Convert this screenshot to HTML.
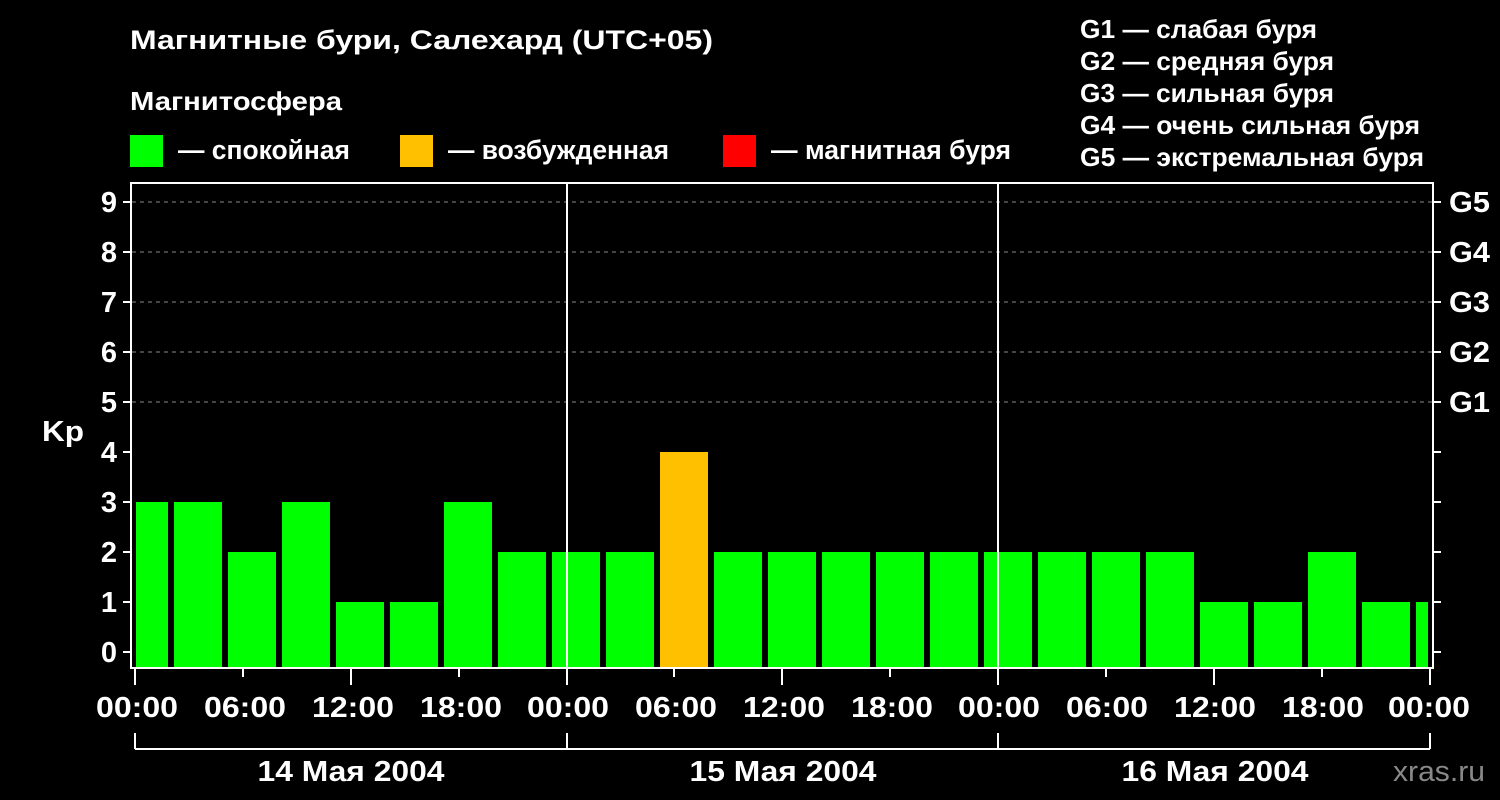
<!DOCTYPE html>
<html><head><meta charset="utf-8"><style>html,body{margin:0;padding:0;background:#000;}svg{display:block}</style></head>
<body>
<svg width="1500" height="800" xmlns="http://www.w3.org/2000/svg" font-family="Liberation Sans, Arial, sans-serif" font-weight="bold" fill="#fff">
<rect width="1500" height="800" fill="#000"/>
<text x="130" y="49" font-size="27" textLength="583" lengthAdjust="spacingAndGlyphs">Магнитные бури, Салехард (UTC+05)</text>
<text x="130" y="110" font-size="26" textLength="212" lengthAdjust="spacingAndGlyphs">Магнитосфера</text>
<rect x="130" y="135" width="33" height="32" fill="#00ff00"/>
<text x="178" y="159" font-size="26.5" textLength="172" lengthAdjust="spacingAndGlyphs">— спокойная</text>
<rect x="400" y="135" width="33" height="32" fill="#ffc000"/>
<text x="448" y="159" font-size="26.5" textLength="221" lengthAdjust="spacingAndGlyphs">— возбужденная</text>
<rect x="723" y="135" width="33" height="32" fill="#ff0000"/>
<text x="771" y="159" font-size="26.5" textLength="240" lengthAdjust="spacingAndGlyphs">— магнитная буря</text>
<g font-size="26">
<text x="1080" y="38" textLength="237" lengthAdjust="spacingAndGlyphs">G1 — слабая буря</text>
<text x="1080" y="70" textLength="254" lengthAdjust="spacingAndGlyphs">G2 — средняя буря</text>
<text x="1080" y="102" textLength="254" lengthAdjust="spacingAndGlyphs">G3 — сильная буря</text>
<text x="1080" y="134" textLength="340" lengthAdjust="spacingAndGlyphs">G4 — очень сильная буря</text>
<text x="1080" y="166" textLength="344" lengthAdjust="spacingAndGlyphs">G5 — экстремальная буря</text>
</g>
<g stroke="#888" stroke-width="1" stroke-dasharray="4,4">
<line x1="132" y1="202" x2="1432" y2="202"/><line x1="132" y1="252" x2="1432" y2="252"/><line x1="132" y1="302" x2="1432" y2="302"/><line x1="132" y1="352" x2="1432" y2="352"/><line x1="132" y1="402" x2="1432" y2="402"/>
</g>
<g fill="#00ff00">
<rect x="136" y="502" width="32" height="166"/>
<rect x="174" y="502" width="48" height="166"/>
<rect x="228" y="552" width="48" height="116"/>
<rect x="282" y="502" width="48" height="166"/>
<rect x="336" y="602" width="48" height="66"/>
<rect x="390" y="602" width="48" height="66"/>
<rect x="444" y="502" width="48" height="166"/>
<rect x="498" y="552" width="48" height="116"/>
<rect x="552" y="552" width="48" height="116"/>
<rect x="606" y="552" width="48" height="116"/>
<rect x="714" y="552" width="48" height="116"/>
<rect x="768" y="552" width="48" height="116"/>
<rect x="822" y="552" width="48" height="116"/>
<rect x="876" y="552" width="48" height="116"/>
<rect x="930" y="552" width="48" height="116"/>
<rect x="984" y="552" width="48" height="116"/>
<rect x="1038" y="552" width="48" height="116"/>
<rect x="1092" y="552" width="48" height="116"/>
<rect x="1146" y="552" width="48" height="116"/>
<rect x="1200" y="602" width="48" height="66"/>
<rect x="1254" y="602" width="48" height="66"/>
<rect x="1308" y="552" width="48" height="116"/>
<rect x="1362" y="602" width="48" height="66"/>
<rect x="1416" y="602" width="12" height="66"/>
</g>
<rect x="660" y="452" width="48" height="216" fill="#ffc000"/>
<g stroke="#fff" stroke-width="2" fill="none">
<rect x="131" y="183" width="1302" height="485"/>
<line x1="567" y1="183" x2="567" y2="668"/>
<line x1="998" y1="183" x2="998" y2="668"/>
<path d="M123 202h8M123 252h8M123 302h8M123 352h8M123 402h8M123 452h8M123 502h8M123 552h8M123 602h8M123 652h8"/>
<path d="M1433 202h8M1433 252h8M1433 302h8M1433 352h8M1433 402h8M1433 452h8M1433 502h8M1433 552h8M1433 602h8M1433 652h8"/>
<path d="M135 668v17M243 668v9M351 668v17M459 668v9M567 668v17M674 668v9M782 668v17M890 668v9M998 668v17M1106 668v9M1214 668v17M1322 668v9M1430 668v17"/>
<path d="M135 733v16M567 733v16M998 733v16M1430 733v16M135 749H1430"/>
</g>
<g font-size="29" text-anchor="end">
<text x="117" y="212">9</text><text x="117" y="262">8</text><text x="117" y="312">7</text><text x="117" y="362">6</text><text x="117" y="412">5</text><text x="117" y="462">4</text><text x="117" y="512">3</text><text x="117" y="562">2</text><text x="117" y="612">1</text><text x="117" y="662">0</text>
</g>
<text x="42" y="441" font-size="29" textLength="42" lengthAdjust="spacingAndGlyphs">Kp</text>
<g font-size="29">
<text x="1449" y="212" textLength="41" lengthAdjust="spacingAndGlyphs">G5</text><text x="1449" y="262" textLength="41" lengthAdjust="spacingAndGlyphs">G4</text><text x="1449" y="312" textLength="41" lengthAdjust="spacingAndGlyphs">G3</text><text x="1449" y="362" textLength="41" lengthAdjust="spacingAndGlyphs">G2</text><text x="1449" y="412" textLength="41" lengthAdjust="spacingAndGlyphs">G1</text>
</g>
<g font-size="29" text-anchor="middle">
<text x="137" y="717" textLength="82" lengthAdjust="spacingAndGlyphs">00:00</text><text x="245" y="717" textLength="82" lengthAdjust="spacingAndGlyphs">06:00</text><text x="353" y="717" textLength="82" lengthAdjust="spacingAndGlyphs">12:00</text><text x="461" y="717" textLength="82" lengthAdjust="spacingAndGlyphs">18:00</text>
<text x="568" y="717" textLength="82" lengthAdjust="spacingAndGlyphs">00:00</text><text x="676" y="717" textLength="82" lengthAdjust="spacingAndGlyphs">06:00</text><text x="784" y="717" textLength="82" lengthAdjust="spacingAndGlyphs">12:00</text><text x="892" y="717" textLength="82" lengthAdjust="spacingAndGlyphs">18:00</text>
<text x="999" y="717" textLength="82" lengthAdjust="spacingAndGlyphs">00:00</text><text x="1107" y="717" textLength="82" lengthAdjust="spacingAndGlyphs">06:00</text><text x="1215" y="717" textLength="82" lengthAdjust="spacingAndGlyphs">12:00</text><text x="1323" y="717" textLength="82" lengthAdjust="spacingAndGlyphs">18:00</text>
<text x="1429" y="717" textLength="82" lengthAdjust="spacingAndGlyphs">00:00</text>
<text x="351" y="781" textLength="187" lengthAdjust="spacingAndGlyphs">14 Мая 2004</text><text x="783" y="781" textLength="187" lengthAdjust="spacingAndGlyphs">15 Мая 2004</text><text x="1215" y="781" textLength="187" lengthAdjust="spacingAndGlyphs">16 Мая 2004</text>
</g>
<text x="1485" y="781" font-size="29" font-weight="normal" fill="#888" text-anchor="end" textLength="92" lengthAdjust="spacingAndGlyphs">xras.ru</text>
</svg>
</body></html>
